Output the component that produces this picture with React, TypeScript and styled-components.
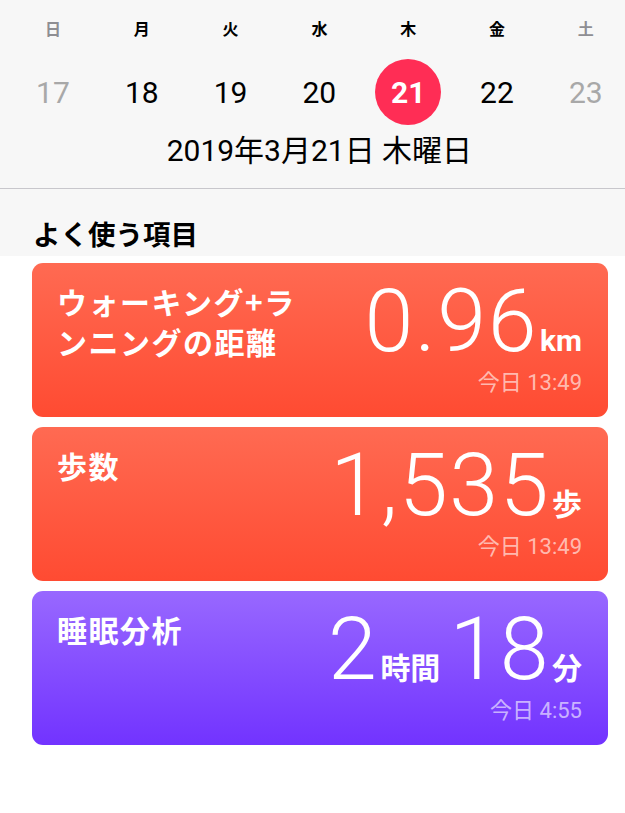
import styled, { createGlobalStyle } from 'styled-components';

const GlobalStyle = createGlobalStyle`
  html, body {
    margin: 0;
    padding: 0;
    background: #ffffff;
  }
  body {
    font-family: "Roboto", "Noto Sans CJK JP", sans-serif;
    -webkit-font-smoothing: antialiased;
  }
`;

const Page = styled.main`
  width: 625px;
  min-height: 813px;
  background: #ffffff;
  overflow: hidden;
`;

const Header = styled.header`
  background: #f7f7f7;
  padding: 16px 0 19px 8.6px;
  border-bottom: 1px solid #c8c7cc;
  overflow: hidden;
`;

const WeekGrid = styled.div`
  display: grid;
  grid-template-columns: repeat(7, 88.8px);
  justify-items: center;
  align-items: center;
`;

const Weekday = styled.div<{ $off?: boolean }>`
  height: 24px;
  line-height: 24px;
  font-size: 16px;
  font-weight: 700;
  font-family: "Noto Sans CJK JP", sans-serif;
  color: ${(p) => (p.$off ? '#8e8e93' : '#000000')};
`;

const DayRow = styled(WeekGrid)`
  margin-top: 19px;
`;

const Day = styled.div<{ $off?: boolean; $today?: boolean }>`
  width: 66px;
  height: 66px;
  border-radius: 50%;
  display: flex;
  align-items: center;
  justify-content: center;
  font-size: 30px;
  font-weight: ${(p) => (p.$today ? 700 : 400)};
  color: ${(p) => (p.$today ? '#ffffff' : p.$off ? '#a8a8a8' : '#000000')};
  background: ${(p) => (p.$today ? '#ff2d55' : 'transparent')};
`;

const DateLine = styled.div`
  width: 621.6px;
  margin-top: 8px;
  height: 36px;
  line-height: 36px;
  text-align: center;
  font-size: 30px;
  color: #000000;
  font-family: "Roboto", "Noto Sans CJK JP", sans-serif;
`;

const SectionHead = styled.div`
  background: #f7f7f7;
  padding: 28px 33px 7px;
`;

const SectionTitle = styled.h2`
  margin: 0;
  height: 32px;
  line-height: 32px;
  font-size: 27.5px;
  font-weight: 700;
  color: #000000;
  font-family: "Noto Sans CJK JP", sans-serif;
`;

const CardList = styled.section`
  display: flex;
  flex-direction: column;
  gap: 10px;
  padding: 7px 17px 0 32px;
`;

const Card = styled.article<{ $tone: 'red' | 'purple' }>`
  height: 154px;
  box-sizing: border-box;
  border-radius: 11px;
  padding: 18px 26px 0 25px;
  display: flex;
  justify-content: space-between;
  color: #ffffff;
  background: ${(p) =>
    p.$tone === 'red'
      ? 'linear-gradient(180deg, #ff6a52 0%, #ff4b32 100%)'
      : 'linear-gradient(180deg, #9868ff 0%, #7233ff 100%)'};
`;

const CardTitle = styled.div`
  font-family: "Noto Sans CJK JP", sans-serif;
  font-weight: 700;
  font-size: 30px;
  line-height: 40px;
  letter-spacing: 1.5px;
`;

const Reading = styled.div`
  display: flex;
  flex-direction: column;
  align-items: flex-end;
`;

const Value = styled.div`
  height: 80px;
  line-height: 80px;
  white-space: nowrap;
`;

const Number = styled.span`
  font-family: "Roboto", sans-serif;
  font-weight: 300;
  font-size: 88px;
  letter-spacing: 1.5px;
`;

const Unit = styled.span`
  font-family: "Roboto", "Noto Sans CJK JP", sans-serif;
  font-weight: 700;
  font-size: 30px;
  margin-left: 2px;
`;

const Gap = styled.span`
  display: inline-block;
  width: 9px;
`;

const Stamp = styled.div`
  margin-top: 10px;
  height: 24px;
  line-height: 24px;
  font-size: 22px;
  color: rgba(255, 255, 255, 0.62);
  font-family: "Roboto", "Noto Sans CJK JP", sans-serif;
`;

const weekdays = [
  { label: '日', off: true },
  { label: '月' },
  { label: '火' },
  { label: '水' },
  { label: '木' },
  { label: '金' },
  { label: '土', off: true },
];

const days = [
  { n: 17, off: true },
  { n: 18 },
  { n: 19 },
  { n: 20 },
  { n: 21, today: true },
  { n: 22 },
  { n: 23, off: true },
];

function App() {
  return (
    <Page>
      <GlobalStyle />
      <Header>
        <WeekGrid>
          {weekdays.map((w) => (
            <Weekday key={w.label} $off={w.off}>
              {w.label}
            </Weekday>
          ))}
        </WeekGrid>
        <DayRow>
          {days.map((d) => (
            <Day key={d.n} $off={d.off} $today={d.today}>
              {d.n}
            </Day>
          ))}
        </DayRow>
        <DateLine>2019年3月21日 木曜日</DateLine>
      </Header>

      <SectionHead>
        <SectionTitle>よく使う項目</SectionTitle>
      </SectionHead>

      <CardList>
        <Card $tone='red'>
          <CardTitle>
            ウォーキング+ラ
            <br />
            ンニングの距離
          </CardTitle>
          <Reading>
            <Value>
              <Number>0.96</Number>
              <Unit>km</Unit>
            </Value>
            <Stamp>今日 13:49</Stamp>
          </Reading>
        </Card>

        <Card $tone='red'>
          <CardTitle>歩数</CardTitle>
          <Reading>
            <Value>
              <Number>1,535</Number>
              <Unit>歩</Unit>
            </Value>
            <Stamp>今日 13:49</Stamp>
          </Reading>
        </Card>

        <Card $tone='purple'>
          <CardTitle>睡眠分析</CardTitle>
          <Reading>
            <Value>
              <Number>2</Number>
              <Unit>時間</Unit>
              <Gap />
              <Number>18</Number>
              <Unit>分</Unit>
            </Value>
            <Stamp>今日 4:55</Stamp>
          </Reading>
        </Card>
      </CardList>
    </Page>
  );
}

export default App;
